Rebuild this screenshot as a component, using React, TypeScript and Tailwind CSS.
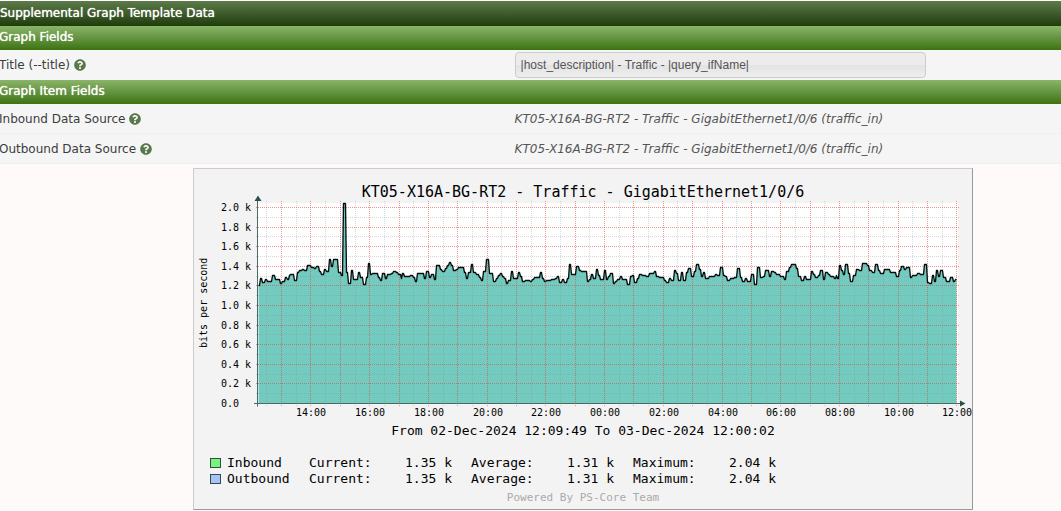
import type { ReactNode } from "react";
import { FaQuestionCircle } from "react-icons/fa";

const PLOT = { left: 257, right: 957, top: 203, bottom: 403 };

// [x, y] start of every sample step, in canvas units
const samples: [number, number][] = [
  [258, 285], [260, 278], [262, 282], [265, 279], [267, 281], [272, 275], [275, 279], [280, 283],
  [282, 281], [285, 277], [287, 279], [289, 275], [290, 274], [294, 280], [297, 272], [299, 270],
  [302, 269], [304, 270], [307, 265], [311, 267], [314, 268], [316, 266], [319, 271], [321, 274],
  [324, 269], [326, 271], [329, 259], [331, 266], [333, 259], [338, 272], [341, 275], [343, 203],
  [346, 272], [348, 283], [351, 270], [353, 279], [358, 272], [360, 277], [363, 284], [366, 277],
  [368, 263], [370, 274], [372, 273], [378, 277], [380, 280], [382, 273], [385, 278], [387, 274],
  [391, 273], [393, 271], [396, 272], [398, 274], [401, 278], [402, 273], [404, 276], [410, 275],
  [413, 277], [415, 281], [417, 273], [424, 278], [426, 271], [429, 277], [431, 274], [434, 279],
  [436, 265], [440, 269], [442, 271], [445, 268], [447, 265], [449, 262], [451, 265], [453, 270],
  [456, 269], [458, 267], [464, 272], [466, 278], [468, 272], [471, 264], [473, 272], [476, 274],
  [479, 277], [481, 280], [483, 271], [486, 259], [489, 273], [493, 281], [496, 278], [498, 275],
  [500, 273], [502, 276], [504, 278], [506, 283], [508, 280], [511, 271], [513, 278], [518, 272],
  [520, 276], [522, 281], [525, 280], [530, 281], [532, 279], [534, 277], [540, 272], [542, 278],
  [544, 281], [546, 280], [551, 279], [555, 278], [557, 276], [559, 282], [562, 279], [564, 282],
  [567, 278], [569, 264], [571, 274], [576, 266], [579, 270], [581, 271], [587, 281], [589, 279],
  [591, 274], [593, 278], [596, 269], [598, 275], [600, 279], [604, 270], [606, 279], [608, 276],
  [610, 273], [613, 283], [615, 281], [617, 279], [620, 276], [622, 279], [627, 284], [630, 276],
  [632, 275], [634, 282], [637, 278], [639, 274], [642, 275], [646, 276], [649, 273], [654, 271],
  [656, 276], [659, 277], [664, 280], [666, 282], [669, 278], [671, 280], [674, 270], [676, 273],
  [678, 280], [681, 272], [683, 280], [686, 272], [688, 268], [691, 276], [694, 271], [696, 264],
  [699, 269], [701, 276], [703, 272], [705, 278], [709, 276], [715, 274], [717, 275], [720, 267],
  [723, 275], [725, 276], [727, 280], [730, 278], [734, 277], [737, 268], [740, 277], [742, 281],
  [745, 278], [747, 281], [751, 274], [754, 284], [757, 267], [760, 277], [763, 276], [765, 270],
  [769, 276], [771, 271], [774, 272], [776, 274], [780, 276], [784, 279], [786, 271], [789, 267],
  [791, 264], [796, 268], [798, 276], [801, 280], [804, 276], [806, 279], [811, 271], [813, 274],
  [815, 277], [818, 275], [820, 270], [823, 279], [825, 272], [828, 274], [830, 276], [834, 278],
  [836, 275], [837, 278], [839, 265], [841, 270], [843, 274], [845, 264], [848, 273], [850, 281],
  [853, 275], [856, 269], [859, 270], [862, 263], [867, 265], [869, 270], [872, 272], [875, 264],
  [878, 270], [880, 273], [884, 269], [890, 272], [896, 276], [899, 270], [901, 266], [904, 269],
  [906, 267], [910, 277], [912, 275], [917, 273], [920, 274], [924, 264], [927, 282], [929, 283],
  [932, 275], [934, 281], [936, 270], [938, 276], [940, 270], [943, 277], [946, 281], [950, 277],
  [953, 281], [955, 279],
];

const line = samples
  .map(([x, y], i) => `${i === 0 ? "M" : "L"}${x} ${y}H${i < samples.length - 1 ? samples[i + 1][0] - 1 : PLOT.right - 1}`)
  .join("");
const area = `${line}V${PLOT.bottom}H${PLOT.left + 1}Z`;

const yTicks = Array.from({ length: 21 }, (_, n) => ({
  y: Math.round(PLOT.bottom - n * 9.8),
  major: n % 2 === 0,
  label: n === 0 ? "0.0  " : `${(n / 10).toFixed(1)} k`,
}));

// half-hour steps starting at 12:30
const xTicks = Array.from({ length: 48 }, (_, n) => {
  const hour = (12 + (n + 1) / 2) % 24;
  return {
    x: Math.round(266.45 + n * 14.68),
    major: n % 2 === 1,
    label: n % 4 === 3 ? `${String(hour).padStart(2, "0")}:00` : null,
  };
});

const legend = [
  { name: "Inbound", swatch: "bg-[#78f578]", current: "1.35 k", average: "1.31 k", maximum: "2.04 k" },
  { name: "Outbound", swatch: "bg-[#a9c2f9]", current: "1.35 k", average: "1.31 k", maximum: "2.04 k" },
];

function SectionBar({ children }: { children: ReactNode }) {
  return (
    <h2 className="-ml-px h-6 bg-linear-to-b from-[#8ab568] to-[#3d730e] text-xs leading-[22px] text-white text-shadow-[0_0_1px_#ffffff]">
      {children}
    </h2>
  );
}

function FieldLabel({ children }: { children: ReactNode }) {
  return (
    <>
      <span className="-ml-px">{children}</span>
      <FaQuestionCircle className="h-3 w-3 text-[#57794a]" />
    </>
  );
}

function FieldRow({ label, value }: { label: string; value: string }) {
  return (
    <div className="flex h-[30px] items-center border-b border-[#f0f0f0]">
      <div className="flex w-[48.5%] items-center gap-1">
        <FieldLabel>{label}</FieldLabel>
      </div>
      <em className="text-[#555555]">{value}</em>
    </div>
  );
}

function TrafficChart() {
  return (
    <svg
      viewBox="194 169 778 272"
      className="block h-[272px] w-[778px] overflow-visible"
      role="img"
      aria-label="KT05-X16A-BG-RT2 - Traffic"
    >
      <rect x={PLOT.left} y={PLOT.top} width={701} height={200} fill="#ffffff" />
      <g transform="translate(0.5 0.5)" fill="none">
        <path d={area} fill="#73cbc0" />

        {/* grid, major lines over the minor ones */}
        {[false, true].map((major) => (
          <g
            key={String(major)}
            stroke={major ? "#e03c3c" : "#8c8c8c"}
            strokeOpacity={major ? 0.55 : 0.34}
            strokeDasharray="1 1"
          >
            {yTicks
              .filter((tick) => tick.major === major)
              .map(({ y }) => (
                <path key={y} d={`M255.5 ${y}H959`} />
              ))}
            {xTicks
              .filter((tick) => tick.major === major)
              .map(({ x }) => (
                <path key={x} d={`M${x} 200.5V405.5`} />
              ))}
          </g>
        ))}

        <path d={line} stroke="#04100f" strokeWidth="1.35" strokeLinejoin="round" />

        {/* axes */}
        <path d="M257 406V200M253.5 403H961" stroke="#4a6b64" />
      </g>
      <path d="M254.5 201L258 195.5L261.5 201Z" fill="#2d4f47" />
      <path d="M960 400.5L965.5 403.5L960 406.5Z" fill="#2d4f47" />

      <g fontSize="10" fill="#000000">
        {yTicks
          .filter((tick) => tick.major)
          .map(({ y, label }) => (
            <text key={y} x={221} y={y + 4} className="whitespace-pre">
              {label}
            </text>
          ))}
        {xTicks.map(({ x, label }) =>
          label ? (
            <text key={x} x={x + 1} y={416} textAnchor="middle">
              {label}
            </text>
          ) : null,
        )}
        <text transform="rotate(-90 207 348)" x={207} y={348}>
          bits per second
        </text>
      </g>

      <text x={583} y={197} textAnchor="middle" fontSize="15">
        KT05-X16A-BG-RT2 - Traffic - GigabitEthernet1/0/6
      </text>
      <text x={583} y={435} textAnchor="middle" fontSize="13">
        From 02-Dec-2024 12:09:49 To 03-Dec-2024 12:00:02
      </text>
    </svg>
  );
}

function GraphPanel() {
  return (
    <section className="ml-[193px] mt-1 w-fit border border-b-[#999999] border-l-[#cccccc] border-r-[#999999] border-t-[#cccccc] bg-[#f3f3f3] font-['DejaVu_Sans_Mono',monospace] text-black">
      <TrafficChart />
      <table className="ml-4 mt-[14px] table-fixed border-collapse text-left text-[13px] leading-4">
        <tbody>
          {legend.map((row) => (
            <tr key={row.name} className="h-4">
              <td className="w-[17px] p-0">
                <span className={`block h-[10px] w-[11px] border border-[#2d4f47] ${row.swatch}`} />
              </td>
              <th scope="row" className="w-[82px] p-0 font-normal">
                {row.name}
              </th>
              <td className="w-24 p-0">Current:</td>
              <td className="w-[66px] p-0">{row.current}</td>
              <td className="w-24 p-0">Average:</td>
              <td className="w-[66px] p-0">{row.average}</td>
              <td className="w-24 p-0">Maximum:</td>
              <td className="w-[66px] p-0">{row.maximum}</td>
            </tr>
          ))}
        </tbody>
      </table>
      <p className="h-[22px] pt-[3px] text-center text-[11px] leading-4 text-[#aaaaaa]">Powered By PS-Core Team</p>
    </section>
  );
}

export default function App() {
  return (
    <main className="min-h-screen overflow-hidden bg-[#fefaf9] font-['DejaVu_Sans',sans-serif] text-xs text-[#3c3c3c]">
      <h1 className="h-[26px] border-t border-white bg-linear-to-b from-[#5d7b4a] to-[#1f3d0a] text-xs leading-[25px] text-white text-shadow-[0_0_1px_#ffffff]">
        Supplemental Graph Template Data
      </h1>
      <div className="bg-[#f5f5f5]">
        <SectionBar>Graph Fields</SectionBar>
        <div className="flex h-[30px] items-center">
          <label htmlFor="title" className="flex w-[48.5%] items-center gap-1">
            <FieldLabel>Title (--title)</FieldLabel>
          </label>
          <input
            id="title"
            type="text"
            defaultValue="|host_description| - Traffic - |query_ifName|"
            className="mb-px h-[26px] w-[411px] rounded border border-[#cccccc] bg-linear-to-b from-[#ececec] from-50% via-[#e3e3e3] via-50% to-[#eeeeee] px-[5px] font-['Liberation_Sans',Arial,sans-serif] text-xs text-[#555555] outline-none"
          />
        </div>
        <SectionBar>Graph Item Fields</SectionBar>
        <FieldRow label="Inbound Data Source" value="KT05-X16A-BG-RT2 - Traffic - GigabitEthernet1/0/6 (traffic_in)" />
        <FieldRow label="Outbound Data Source" value="KT05-X16A-BG-RT2 - Traffic - GigabitEthernet1/0/6 (traffic_in)" />
      </div>
      <GraphPanel />
    </main>
  );
}
